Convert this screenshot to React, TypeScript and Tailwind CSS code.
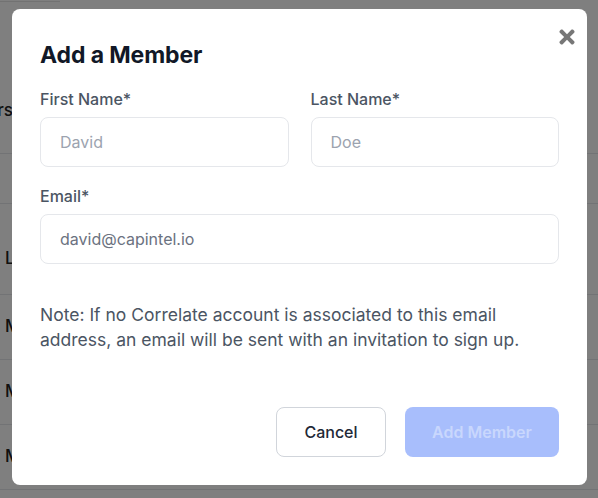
import React from "react";
import { FaTimes } from "react-icons/fa";

export default function App() {
  return (
    <div className="relative w-[598px] h-[498px] overflow-hidden bg-white" style={{ fontFamily: "Inter, 'Noto Sans', sans-serif" }}>
      {/* page behind */}
      <div className="flex flex-col text-[17px] font-medium text-[#222]">
        <div className="h-[2px] w-[60px] border-b border-[#e5e5e5]" />
        <div className="h-[152px] border-b border-[#e5e7eb] flex items-end pb-[30px]">
          <div className="w-[13px] flex justify-end overflow-visible whitespace-nowrap">
            <span>Members</span>
          </div>
        </div>
        <div className="h-[50px] border-b border-[#e5e7eb]" />
        <div className="h-[91px] border-b border-[#e5e7eb] flex items-center pl-[5px] pt-[20px]">Last</div>
        <div className="h-[65px] border-b border-[#e5e7eb] flex items-center pl-[5px]">Mark</div>
        <div className="h-[65px] border-b border-[#e5e7eb] flex items-center pl-[5px]">Mary</div>
        <div className="h-[65px] border-b border-[#e5e7eb] flex items-center pl-[5px]">Mike</div>
      </div>

      {/* overlay */}
      <div className="absolute inset-0 bg-black/50 flex justify-center items-start pt-[9px] pl-[1px]">
        <div className="relative w-[575px] h-[476px] bg-white rounded-[8px] pt-[32px] pl-[28px] pr-[28px] flex flex-col">
          <button className="absolute right-[10px] top-[18px] w-[20px] h-[20px] flex items-center justify-center text-[#777]">
            <FaTimes size={22} />
          </button>
          <h2 className="text-[23px] leading-[28px] font-bold text-[#111827] tracking-[-0.1px]">Add a Member</h2>

          <div className="mt-[20px] grid grid-cols-2 gap-x-[22px]">
            <div className="flex flex-col">
              <label className="text-[16px] leading-[20px] font-medium text-[#4b5563]">First Name*</label>
              <div className="mt-[8px] h-[50px] rounded-[8px] border border-[#e5e7eb] flex items-center px-[19px] text-[16px] text-[#9ca3af]">
                David
              </div>
            </div>
            <div className="flex flex-col">
              <label className="text-[16px] leading-[20px] font-medium text-[#4b5563]">Last Name*</label>
              <div className="mt-[8px] h-[50px] rounded-[8px] border border-[#e5e7eb] flex items-center px-[19px] text-[16px] text-[#9ca3af]">
                Doe
              </div>
            </div>
          </div>

          <label className="mt-[19px] text-[16px] leading-[20px] font-medium text-[#4b5563]">Email*</label>
          <div className="mt-[8px] h-[50px] rounded-[8px] border border-[#e5e7eb] flex items-center px-[19px] text-[16px] text-[#6b7280]">
            david@capintel.io
          </div>

          <p className="mt-[38px] text-[17.5px] leading-[25px] text-[#4b5563]">
            Note: If no Correlate account is associated to this email address, an email will be sent with an invitation to sign up.
          </p>

          <div className="mt-auto mb-[28px] flex justify-end gap-[19px]">
            <button className="w-[110px] h-[50px] rounded-[8px] border border-[#d1d5db] bg-white text-[16px] font-medium text-[#1f2937]">
              Cancel
            </button>
            <button className="w-[154px] h-[50px] rounded-[8px] bg-[#a8befc] text-[16px] font-semibold text-[#c9d7fd]">
              Add Member
            </button>
          </div>
        </div>
      </div>
    </div>
  );
}
